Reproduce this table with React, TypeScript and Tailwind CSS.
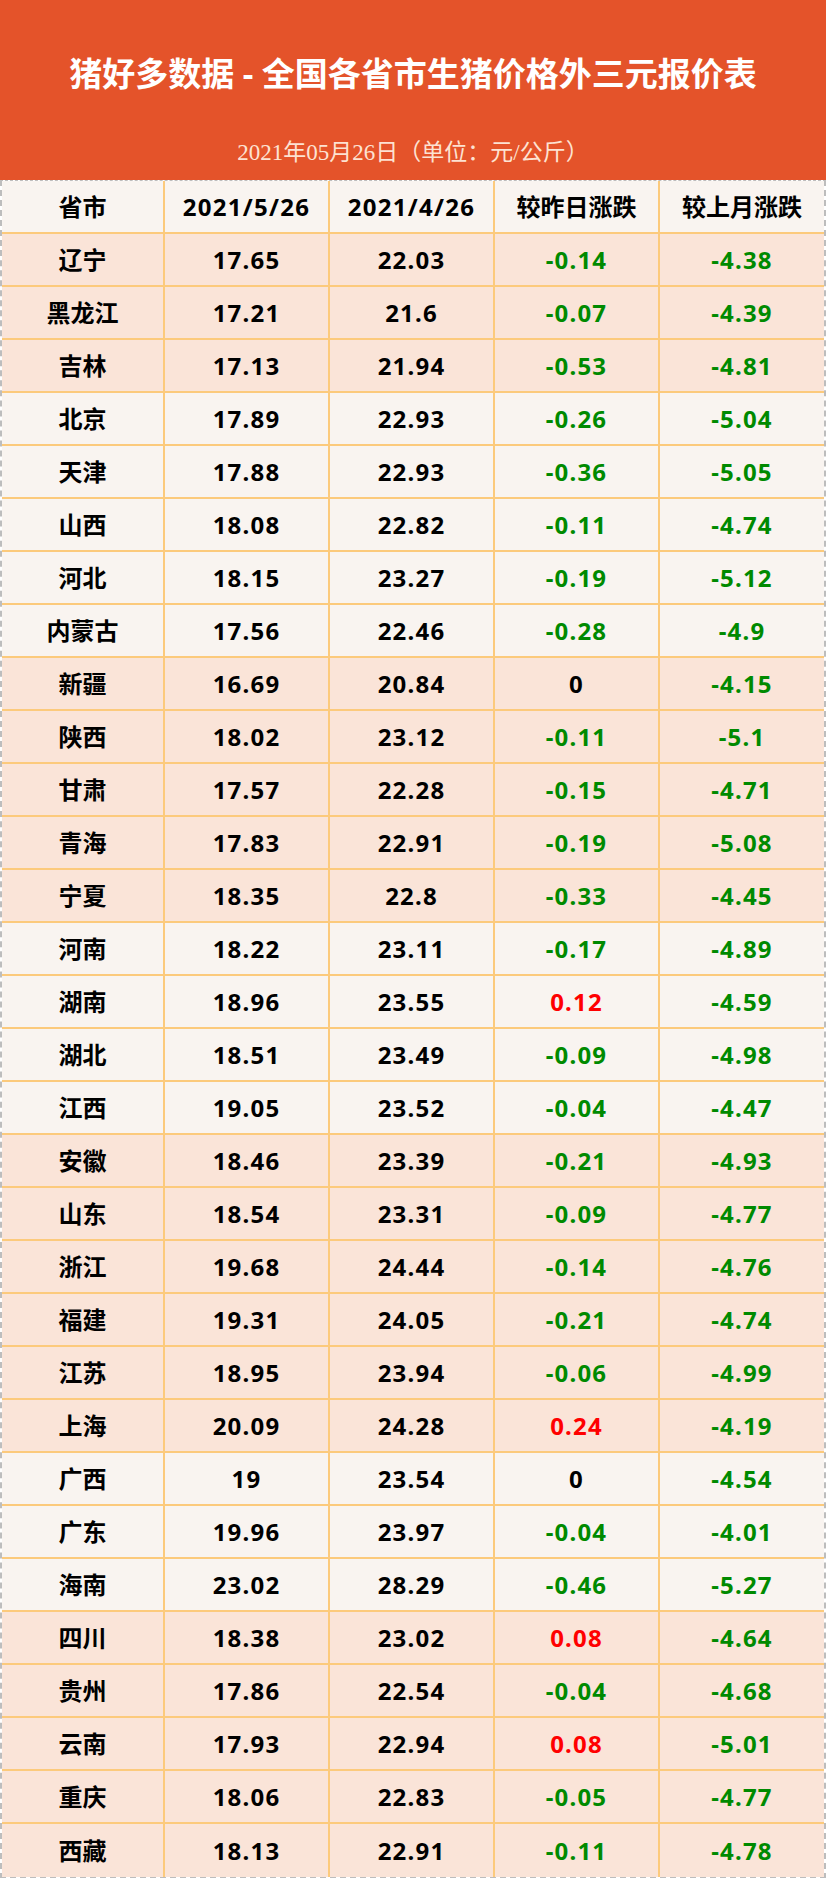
const rows: [string, string, string, string, string, boolean][] = [
  ["辽宁", "17.65", "22.03", "-0.14", "-4.38", true],
  ["黑龙江", "17.21", "21.6", "-0.07", "-4.39", true],
  ["吉林", "17.13", "21.94", "-0.53", "-4.81", true],
  ["北京", "17.89", "22.93", "-0.26", "-5.04", false],
  ["天津", "17.88", "22.93", "-0.36", "-5.05", false],
  ["山西", "18.08", "22.82", "-0.11", "-4.74", false],
  ["河北", "18.15", "23.27", "-0.19", "-5.12", false],
  ["内蒙古", "17.56", "22.46", "-0.28", "-4.9", false],
  ["新疆", "16.69", "20.84", "0", "-4.15", true],
  ["陕西", "18.02", "23.12", "-0.11", "-5.1", true],
  ["甘肃", "17.57", "22.28", "-0.15", "-4.71", true],
  ["青海", "17.83", "22.91", "-0.19", "-5.08", true],
  ["宁夏", "18.35", "22.8", "-0.33", "-4.45", true],
  ["河南", "18.22", "23.11", "-0.17", "-4.89", false],
  ["湖南", "18.96", "23.55", "0.12", "-4.59", false],
  ["湖北", "18.51", "23.49", "-0.09", "-4.98", false],
  ["江西", "19.05", "23.52", "-0.04", "-4.47", false],
  ["安徽", "18.46", "23.39", "-0.21", "-4.93", true],
  ["山东", "18.54", "23.31", "-0.09", "-4.77", true],
  ["浙江", "19.68", "24.44", "-0.14", "-4.76", true],
  ["福建", "19.31", "24.05", "-0.21", "-4.74", true],
  ["江苏", "18.95", "23.94", "-0.06", "-4.99", true],
  ["上海", "20.09", "24.28", "0.24", "-4.19", true],
  ["广西", "19", "23.54", "0", "-4.54", false],
  ["广东", "19.96", "23.97", "-0.04", "-4.01", false],
  ["海南", "23.02", "28.29", "-0.46", "-5.27", false],
  ["四川", "18.38", "23.02", "0.08", "-4.64", true],
  ["贵州", "17.86", "22.54", "-0.04", "-4.68", true],
  ["云南", "17.93", "22.94", "0.08", "-5.01", true],
  ["重庆", "18.06", "22.83", "-0.05", "-4.77", true],
  ["西藏", "18.13", "22.91", "-0.11", "-4.78", true],
];

function changeColor(v: string) {
  if (v.startsWith("-")) return "text-[#008a00]";
  if (v === "0") return "text-black";
  return "text-[#ff0000]";
}

function Cell({ children, last, className = "" }: { children: React.ReactNode; last?: boolean; className?: string }) {
  return (
    <div className={`flex items-center justify-center ${last ? "" : "border-r-2 border-[#fcca7c]"} ${className}`}>
      {children}
    </div>
  );
}

export default function App() {
  return (
    <div className="w-[826px] bg-white" style={{ fontFamily: '"Noto Sans", "Noto Sans CJK SC", sans-serif' }}>
      <div className="flex h-[180px] flex-col items-center bg-[#e4532a]">
        <h1 className="mt-[54px] h-[40px] text-[33px] font-bold leading-[40px] text-white">
          猪好多数据 - 全国各省市生猪价格外三元报价表
        </h1>
        <p
          className="mt-[44px] text-[23px] leading-[30px] text-[#fde2d2]"
          style={{ fontFamily: '"Liberation Serif", "Noto Sans CJK SC", serif' }}
        >
          2021年05月26日（单位：元/公斤）
        </p>
      </div>
      <div className="border-2 border-t border-dashed border-[#bdbdbd] text-[24px] font-bold text-black">
        <div className="grid h-[53px] grid-cols-[163px_165px_165px_165px_1fr] border-b-2 border-[#fcca7c] bg-[#f9f4f0]">
          <Cell>省市</Cell>
          <Cell className="tracking-[1.3px]">2021/5/26</Cell>
          <Cell className="tracking-[1.3px]">2021/4/26</Cell>
          <Cell>较昨日涨跌</Cell>
          <Cell last>较上月涨跌</Cell>
        </div>
        {rows.map(([name, a, b, d, m, peach], i) => (
          <div
            key={name}
            className={`grid h-[53px] grid-cols-[163px_165px_165px_165px_1fr] ${i === rows.length - 1 ? "" : "border-b-2 border-[#fcca7c]"} ${peach ? "bg-[#fae4d8]" : "bg-[#f9f4f0]"}`}
          >
            <Cell>{name}</Cell>
            <Cell className="tracking-[1.2px]">{a}</Cell>
            <Cell className="tracking-[1.2px]">{b}</Cell>
            <Cell className={`tracking-[1.2px] ${changeColor(d)}`}>{d}</Cell>
            <Cell last className={`tracking-[1.2px] ${changeColor(m)}`}>{m}</Cell>
          </div>
        ))}
      </div>
    </div>
  );
}
